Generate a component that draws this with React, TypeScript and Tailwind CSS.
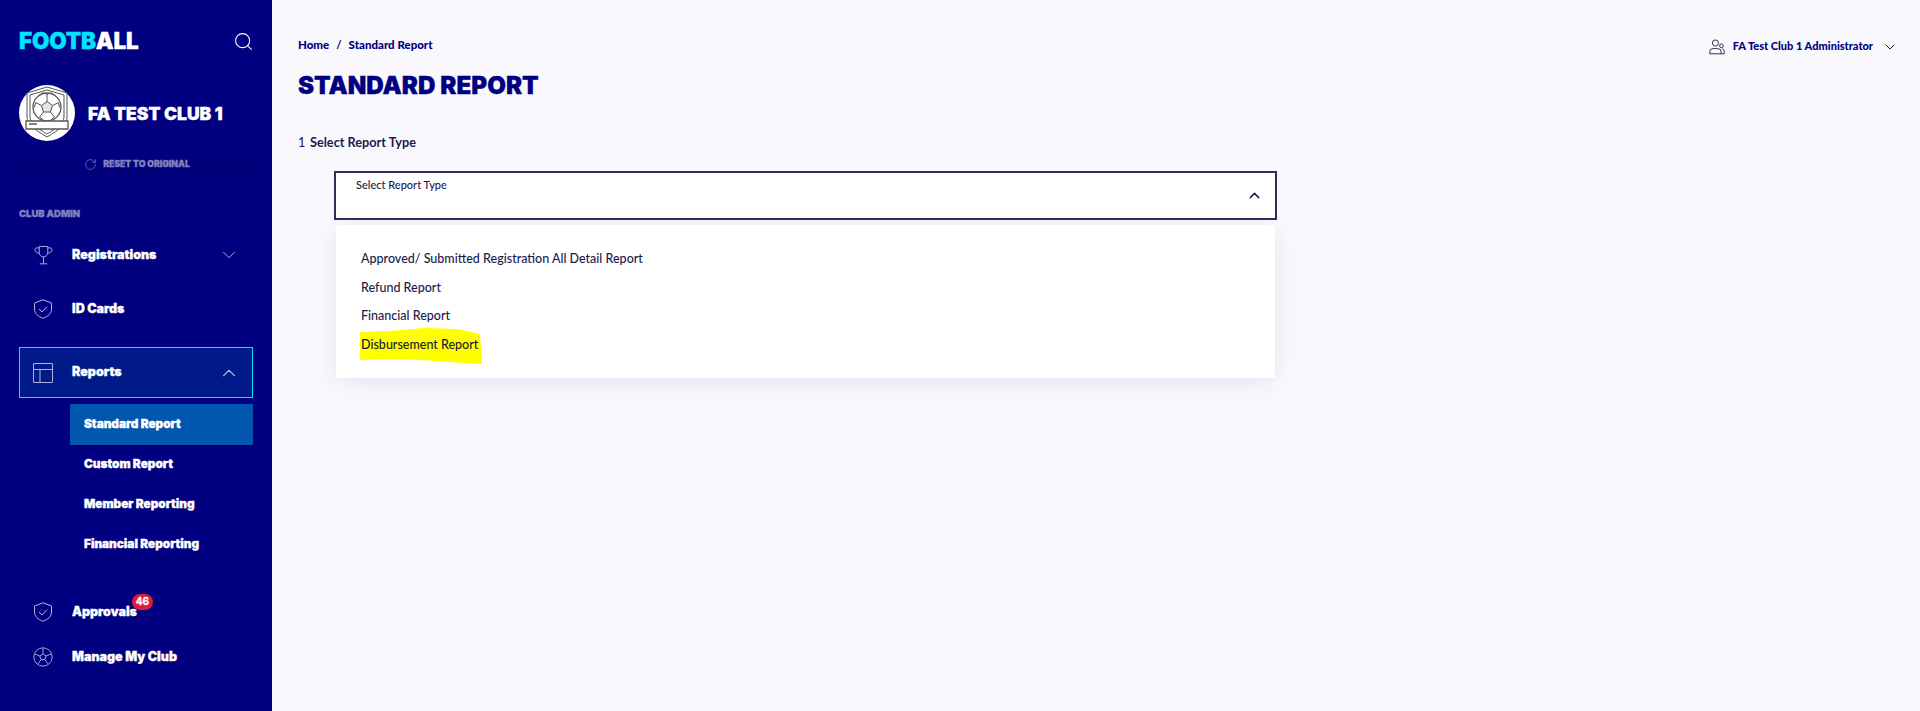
import { ChevronDown, ChevronUp, RotateCw, Search } from "lucide-react";

const heavy = "font-['Inter',sans-serif] font-black [-webkit-text-stroke:0.3px_currentColor]";
const body = "font-['Lato',sans-serif]";

const SoccerBall = ({ className }: { className?: string }) => (
  <svg viewBox="0 0 24 24" fill="none" stroke="currentColor" strokeWidth="1.1" className={className}>
    <circle cx="12" cy="12" r="11" />
    <path d="M12 8l3.800 2.800-1.500 4.400H9.700L8.200 10.800 12 8z" />
    <path d="M12 8V1.500M15.800 10.800l6-2.500M14.300 15.200l3.700 5M9.700 15.200l-3.700 5M8.200 10.800l-6-2.500" />
  </svg>
);

const TableIcon = ({ className }: { className?: string }) => (
  <svg viewBox="0 0 20 20" fill="none" stroke="currentColor" strokeWidth="1" className={className}>
    <rect x="0.500" y="0.500" width="19" height="19" rx="0.500" />
    <path d="M0.500 6.500h19M7 6.500V19.500" />
  </svg>
);

const ShieldIcon = ({ className }: { className?: string }) => (
  <svg viewBox="0 0 20 20" fill="none" stroke="currentColor" strokeWidth="1" className={className}>
    <path d="M10 0.800l8.500 3.200v6c0 4.500-3.700 7.700-8.500 9.200-4.800-1.500-8.500-4.700-8.500-9.200V4L10 0.800z" />
    <path d="M6 10l3 3 5-5.500" />
  </svg>
);

const TrophyIcon = ({ className }: { className?: string }) => (
  <svg viewBox="0 0 20 20" fill="none" stroke="currentColor" strokeWidth="1" className={className}>
    <path d="M5.500 1h9v6.500a4.500 4.500 0 0 1-9 0V1z" />
    <path d="M5.500 2.500H3A2 2 0 0 0 1 4.500c0 2 2 3.500 4.700 3.500M14.500 2.500H17a2 2 0 0 1 2 2c0 2-2 3.500-4.700 3.500" />
    <path d="M10 12v7M6 19.300h8" />
  </svg>
);

const UsersIcon = ({ className }: { className?: string }) => (
  <svg viewBox="0 0 20 20" fill="none" stroke="currentColor" strokeWidth="1.200" className={className}>
    <circle cx="8" cy="5" r="3.800" />
    <path d="M1 18.500v-2.500a4 4 0 0 1 4-4h6a4 4 0 0 1 4 4v2.500H1z" />
    <circle cx="15.500" cy="8.500" r="2.300" />
    <path d="M16.500 12.500a2.800 2.800 0 0 1 2.500 2.800v3.200h-4" />
  </svg>
);

const ClubCrest = () => (
  <div className="w-[56px] h-[56px] rounded-full bg-white flex items-center justify-center">
    <svg viewBox="0 0 56 56" fill="none" stroke="#555" strokeWidth="1" className="w-[56px] h-[56px]">
      <path d="M28 2l20 6v24c0 7-8 13-20 20C16 45 8 39 8 32V8l20-6z" />
      <path d="M28 5l17 5v22c0 6-7 11-17 17-10-6-17-11-17-17V10l17-5z" />
      <circle cx="28" cy="22" r="14" fill="white" strokeWidth="1.300" />
      <path d="M28 16.500l5.500 4-2 6.500h-7l-2-6.500 5.500-4z" fill="#e5e5e5" />
      <path d="M28 16.500V9l-5-1M28 9l5-1M33.500 20.500l6-3 1 5M31.500 27l4 5-4 3M24.500 27l-4 5 4 3M22.500 20.500l-6-3-1 5" />
      <path d="M7 36h42v8H7z" fill="white" strokeWidth="1.300" />
      <path d="M10 39h8" strokeWidth="1.500" />
    </svg>
  </div>
);

const NavRow = ({
  icon,
  label,
  chevron,
  badge,
  rowClass,
}: {
  icon: React.ReactNode;
  label: string;
  chevron?: boolean;
  badge?: string;
  rowClass: string;
}) => (
  <div className={`flex items-center pl-[33px] pr-[32px] ${rowClass}`}>
    <span className="w-[20px] h-[20px] text-[#b3b3d9] flex items-center justify-center">{icon}</span>
    <span className={`relative ml-[19px] text-[12.500px] text-white ${heavy}`}>
      {label}
      {badge && (
        <span className="absolute -top-[9px] -right-[16px] w-[21px] h-[16px] rounded-full bg-[#dc1c3c] text-white text-[10px] leading-[15px] text-center font-bold">
          {badge}
        </span>
      )}
    </span>
    {chevron && <ChevronDown className="ml-auto w-[22px] h-[22px] text-[#b3b3d9]" strokeWidth={1} />}
  </div>
);

const SubItem = ({ label, rowClass }: { label: string; rowClass: string }) => (
  <div className={`pl-[14px] flex items-center text-[11.800px] text-white ${heavy} ${rowClass}`}>{label}</div>
);

const Sidebar = () => (
  <aside className="w-[272px] shrink-0 h-[711px] bg-[#000080] flex flex-col">
    <div className="flex items-center justify-between pl-[19px] pr-[18px] pt-[28px] h-[54px]">
      <div className={`text-[22.500px] leading-[26px] tracking-[-0.2px] ${heavy}`}>
        <span className="text-[#00e5ff]">FOOTB</span>
        <span className="text-white">ALL</span>
      </div>
      <Search className="w-[21px] h-[21px] text-white" strokeWidth={1.2} />
    </div>
    <div className="flex items-center pl-[19px] mt-[31px] gap-[13px]">
      <ClubCrest />
      <span className={`mt-[2px] text-[17.500px] text-white ${heavy}`}>FA TEST CLUB 1</span>
    </div>
    <div className="mx-[14px] mt-[7px] h-[32px] pt-[1px] bg-[#00007a] flex items-center justify-center gap-[6px] pl-[2px]">
      <RotateCw className="w-[13px] h-[13px] text-[#8080bf]" strokeWidth={1.2} />
      <span className={`text-[8.700px] text-[#8080bf] ${heavy}`}>RESET TO ORIGINAL</span>
    </div>
    <div className={`mt-[28px] pl-[19px] text-[9.500px] leading-[12px] text-[#8080bf] ${heavy}`}>CLUB ADMIN</div>

    <NavRow
      rowClass="mt-[14px] h-[42px]"
      icon={<TrophyIcon className="w-[19px] h-[20px] shrink-0" />}
      label="Registrations"
      chevron
    />
    <NavRow
      rowClass="mt-[12px] h-[42px]"
      icon={<ShieldIcon className="w-[20px] h-[20px] shrink-0" />}
      label="ID Cards"
    />

    <div className="mx-[19px] mt-[17px] h-[51px] border border-[#00e5ff] bg-[#001a8a] flex items-center pl-[13px]">
      <TableIcon className="w-[20px] h-[20px] text-[#b3b3d9]" />
      <span className={`ml-[19px] text-[12.500px] text-white ${heavy}`}>Reports</span>
      <ChevronUp className="ml-auto mr-[12px] w-[22px] h-[22px] text-[#b3b3d9]" strokeWidth={1.2} />
    </div>

    <div className="ml-[70px] mr-[19px] mt-[6px] flex flex-col">
      <SubItem label="Standard Report" rowClass="h-[41px] bg-[#0057ad] rounded-[1px]" />
      <SubItem label="Custom Report" rowClass="h-[40px]" />
      <SubItem label="Member Reporting" rowClass="h-[40px]" />
      <SubItem label="Financial Reporting" rowClass="h-[40px]" />
    </div>

    <NavRow
      rowClass="mt-[26px] h-[42px]"
      icon={<ShieldIcon className="w-[20px] h-[20px] shrink-0" />}
      label="Approvals"
      badge="46"
    />
    <NavRow
      rowClass="mt-[3px] h-[42px]"
      icon={<SoccerBall className="w-[20px] h-[20px] shrink-0" />}
      label="Manage My Club"
    />
  </aside>
);

const options = ["Approved/ Submitted Registration All Detail Report", "Refund Report", "Financial Report"];

export default function App() {
  return (
    <div className="flex w-full h-[711px] overflow-hidden bg-[#f9f9fd]">
      <Sidebar />
      <main className="flex-1 min-w-0 pl-[26px] pr-[22px]">
        <div className="flex items-center justify-between pt-[36px] h-[53px]">
          <div className={`text-[11.500px] text-[#000080] font-black ${body}`}>
            Home<span className="mx-[7px] font-bold">/</span>Standard Report
          </div>
          <div className="flex items-center mt-[4px]">
            <UsersIcon className="w-[16px] h-[16px] text-[#2a2a4f]" />
            <span className={`ml-[8px] text-[11px] text-[#000080] font-black ${body}`}>FA Test Club 1 Administrator</span>
            <ChevronDown className="ml-[9px] w-[16px] h-[16px] text-[#1a1a66]" strokeWidth={1.5} />
          </div>
        </div>
        <h1 className={`mt-[17px] text-[24.200px] leading-[32px] text-[#000080] ${heavy}`}>STANDARD REPORT</h1>
        <div className={`mt-[31px] flex items-center text-[12.700px] leading-[18px] text-[#1a1a4d] font-bold ${body}`}>
          <span className="font-normal w-[12px]">1</span>
          Select Report Type
        </div>

        <div className="ml-[36px] w-[943px] mt-[20px]">
          <div className="h-[49px] border-2 border-[#2e2e5e] bg-white relative pl-[20px] pt-[5px]">
            <span className={`block text-[11px] leading-[14px] text-[#1a1a4d] font-medium ${body}`}>Select Report Type</span>
            <ChevronUp className="absolute right-[12px] top-[14px] w-[17px] h-[17px] text-[#1a1a4d]" strokeWidth={2} />
          </div>
          <div className="relative mx-[2px] mt-[5px] h-[153px] bg-white shadow-[0_4px_24px_rgba(40,40,120,0.1)] pl-[25px] pt-[20.500px]">
            {options.map((o) => (
              <div key={o} className={`h-[28.500px] flex items-center text-[12.500px] text-[#1a1a4d] font-medium ${body}`}>{o}</div>
            ))}
            <div className="relative h-[28.500px] flex items-center w-fit">
              <svg viewBox="0 0 122 36" className="absolute -left-[1px] top-[-3px] w-[122px] h-[36px]">
                <path d="M0 4l30-1 34-3 34 1 22 5 2 30-20-1-40-3-34-1-30 1z" fill="#ffff00" />
              </svg>
              <span className={`relative text-[12.500px] text-[#1a1a33] font-medium ${body}`}>Disbursement Report</span>
            </div>
          </div>
        </div>
      </main>
    </div>
  );
}
